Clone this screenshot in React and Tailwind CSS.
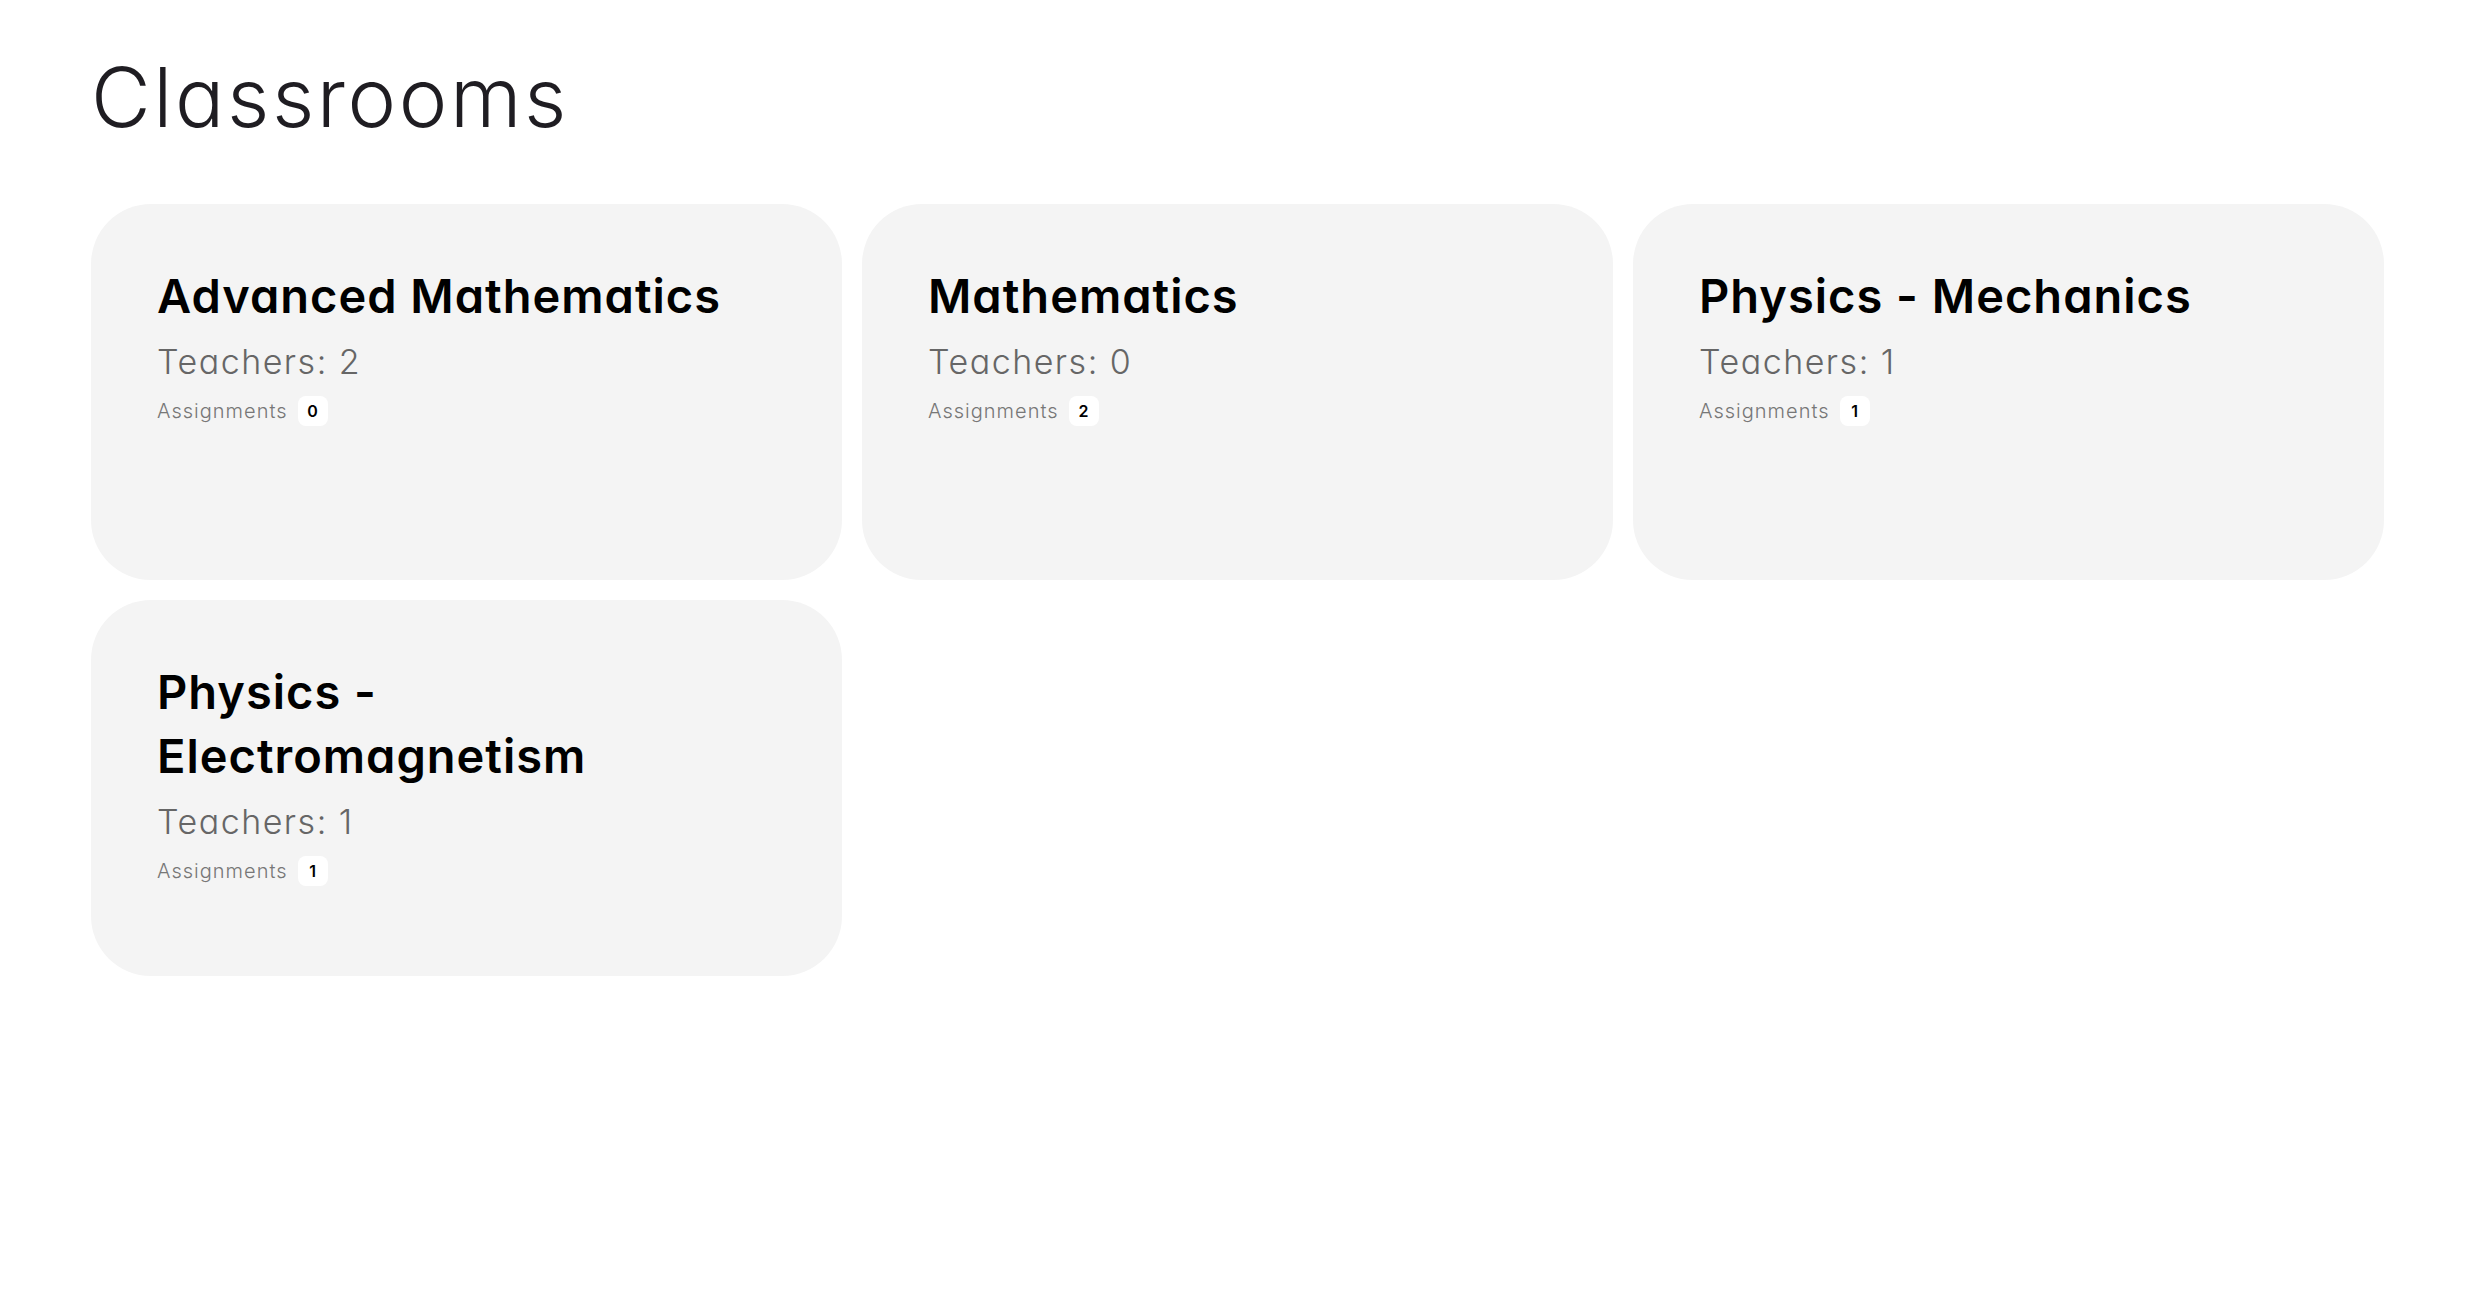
const classrooms = [
  { id: 1, name: 'Advanced Mathematics', teachers: 2, assignments: 0 },
  { id: 2, name: 'Mathematics', teachers: 0, assignments: 2 },
  { id: 3, name: 'Physics - Mechanics', teachers: 1, assignments: 1 },
  { id: 4, name: 'Physics - Electromagnetism', teachers: 1, assignments: 1 },
]

function ClassroomCard({ room }) {
  return (
    <div className="bg-[#f4f4f4] rounded-[60px] h-[376px] pl-[66px] pr-[60px] pt-[60px]">
      <h2 className="text-[47px] leading-[64px] font-semibold text-black tracking-[1px]">{room.name}</h2>
      <p className="mt-[10px] text-[34px] leading-[48px] font-light text-[#666666] tracking-[1.5px]">Teachers: {room.teachers}</p>
      <div className="mt-[10px] flex items-center gap-[10px]">
        <span className="text-[20px] font-light text-[#777777] tracking-[1px]">Assignments</span>
        <span className="bg-white rounded-[8px] w-[30px] h-[30px] flex items-center justify-center text-[16px] font-semibold text-black">
          {room.assignments}
        </span>
      </div>
    </div>
  )
}

export default function App() {
  return (
    <div className="min-h-screen bg-white pl-[91px] pr-[101px] pt-[57px] font-['Inter',sans-serif] [font-feature-settings:'cv11']">
      <h1 className="text-[82px] leading-none font-light text-[#1f1d22] tracking-[2.6px] mb-[65px]">Classrooms</h1>

      {/* Classroom cards */}
      <div className="grid grid-cols-3 gap-5">
        {classrooms.map(room => (
          <ClassroomCard key={room.id} room={room} />
        ))}
      </div>
    </div>
  )
}
